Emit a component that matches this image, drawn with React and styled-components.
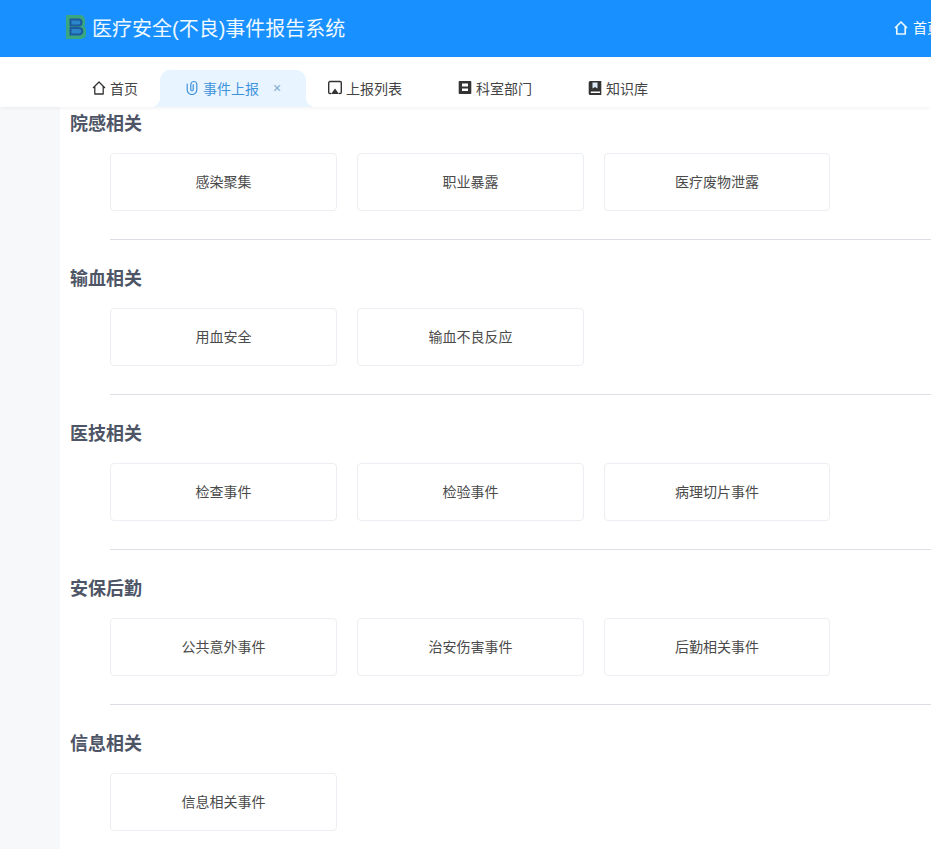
import React from "react";
import styled, { createGlobalStyle } from "styled-components";

const GlobalStyle = createGlobalStyle`
  html, body {
    margin: 0;
    padding: 0;
    height: 100%;
    overflow: hidden;
    background: #fff;
    font-family: "Liberation Sans", "Noto Sans CJK SC", sans-serif;
  }
`;

const Page = styled.div`
  width: 931px;
  height: 849px;
  display: flex;
  flex-direction: column;
  overflow: hidden;
`;

const Header = styled.header`
  height: 57px;
  flex: none;
  box-sizing: border-box;
  background: #1890ff;
  display: flex;
  align-items: center;
  justify-content: space-between;
  padding: 0 0 3px 66px;
  color: #fff;
  white-space: nowrap;
`;

const Brand = styled.div`
  display: flex;
  align-items: center;
  gap: 6px;
  font-size: 20px;
  color: #eef8ff;
`;

const HeaderLink = styled.div`
  display: flex;
  align-items: center;
  gap: 5px;
  font-size: 14px;
  width: 37px;
  overflow: hidden;
  flex: none;
`;

const TabBar = styled.nav`
  height: 50px;
  flex: none;
  box-sizing: border-box;
  padding: 13px 0 0 67px;
  display: flex;
  position: relative;
  background: #fff;
  box-shadow: 0 1px 4px rgba(0, 21, 41, 0.06);
`;

const Tab = styled.div`
  position: relative;
  box-sizing: border-box;
  width: ${(p) => p.$width}px;
  flex: none;
  display: flex;
  align-items: center;
  padding: 0 0 2px 25px;
  gap: 4px;
  font-size: 14px;
  color: ${(p) => (p.$active ? "#3f93dc" : "#444")};
  background: ${(p) => (p.$active ? "#e8f4ff" : "transparent")};
  border-radius: 10px 10px 0 0;
  margin-right: ${(p) => (p.$active ? "-3px" : "0")};
  z-index: ${(p) => (p.$active ? 1 : 0)};

  ${(p) =>
    p.$active &&
    `
    &::before, &::after {
      content: "";
      position: absolute;
      bottom: 0;
      width: 10px;
      height: 10px;
    }
    &::before {
      left: -10px;
      background: radial-gradient(circle at 0 0, transparent 10px, #e8f4ff 10.5px);
    }
    &::after {
      right: -10px;
      background: radial-gradient(circle at 100% 0, transparent 10px, #e8f4ff 10.5px);
    }
  `}
`;

const TabIcon = styled.svg`
  width: 14px;
  height: 15px;
  flex: none;
  color: ${(p) => (p.$active ? "#3f93dc" : "#333")};
`;

const HeaderIcon = styled(TabIcon)`
  color: #e8f7ff;
`;

const Close = styled.span`
  margin-left: 10px;
  font-size: 14px;
  color: #7fa9cf;
`;

const Body = styled.div`
  flex: 1;
  display: flex;
  min-height: 0;
`;

const Gutter = styled.aside`
  width: 60px;
  flex: none;
  background: #f6f8fa;
`;

const Content = styled.main`
  flex: 1;
  min-width: 0;
  padding: 4px 0 0 10px;
  overflow: hidden;
`;

const Section = styled.section`
  padding-bottom: 26px;
`;

const Title = styled.h3`
  margin: 0;
  padding-top: 1px;
  font-size: 18px;
  line-height: 24px;
  font-weight: 700;
  color: #4e5566;
`;

const CardRow = styled.div`
  margin: 17px 0 28px 40px;
  display: flex;
  gap: 20px;
`;

const Card = styled.div`
  box-sizing: border-box;
  width: 227px;
  height: 58px;
  flex: none;
  display: flex;
  align-items: center;
  justify-content: center;
  padding-bottom: 2px;
  background: #fff;
  border: 1px solid #ebeef2;
  border-radius: 4px;
  font-size: 14px;
  color: #4a4a4a;

  &:nth-child(3) {
    width: 226px;
  }
`;

const Divider = styled.hr`
  margin: 0 0 0 40px;
  border: 0;
  border-top: 1px solid #dcdfe6;
`;

const homePath = "M1 8 7 2l6 6M2.800 6.600V14h8.400V6.600";

const HomeIcon = () => (
  <TabIcon viewBox="0 0 14 15" fill="none" stroke="currentColor" strokeWidth="1.3">
    <path d={homePath} strokeLinejoin="round" />
  </TabIcon>
);

const ClipIcon = () => (
  <TabIcon $active viewBox="0 0 14 15" fill="none" stroke="currentColor" strokeWidth="1.2" strokeLinecap="round">
    <path d="M2.200 4v5.800a4.800 4.800 0 0 0 9.600 0V4.500a3 3 0 0 0-6 0v5.300a1.200 1.200 0 0 0 2.400 0V4.500" />
  </TabIcon>
);

const ScreenIcon = () => (
  <TabIcon viewBox="0 0 14 15">
    <path d="M3 13.500H2A1.300 1.300 0 0 1 .700 12.200V2.800A1.300 1.300 0 0 1 2 1.500h10a1.300 1.300 0 0 1 1.300 1.300v9.400a1.300 1.300 0 0 1-1.300 1.300h-1" fill="none" stroke="currentColor" strokeWidth="1.4" />
    <path d="M7 8.500 11 14H3z" fill="currentColor" />
  </TabIcon>
);

const NotebookIcon = () => (
  <TabIcon viewBox="0 0 14 15">
    <path fillRule="evenodd" fill="currentColor" d="M1.500 1h11a.8.8 0 0 1 .8.8v11.400a.8.8 0 0 1-.8.8h-11a.8.800 0 0 1-.8-.8V1.800a.8.800 0 0 1 .8-.8ZM4 3.500v3h6v-3Zm0 5v2.500h6V8.500Z" />
  </TabIcon>
);

const BookIcon = () => (
  <TabIcon viewBox="0 0 14 15">
    <path fill="currentColor" d="M2.200 1H13.300v14H2.200A1.500 1.500 0 0 1 .7 13.500V2.500A1.500 1.500 0 0 1 2.200 1Z" />
    <path fill="#fff" d="M2.800 11.500h9.200v1.500H2.800z" />
    <path fill="#dbe9f7" d="M4.500 2.500h5v6L7 7 4.500 8.500Z" />
  </TabIcon>
);

const HeaderHomeIcon = () => (
  <HeaderIcon viewBox="0 0 14 15" fill="none" stroke="currentColor" strokeWidth="1.7">
    <path d={homePath} strokeLinejoin="round" />
  </HeaderIcon>
);

const Logo = () => (
  <svg width="20" height="24" viewBox="0 0 20 24">
    <path d="M0 0h14a5 5 0 0 1 5 5v3.500a4 4 0 0 1-1 2.700 4.500 4.500 0 0 1 2 3.800V19a5 5 0 0 1-5 5H0z" fill="#3aa680" />
    <path fill="#2b86c9" stroke="#1c5a9e" strokeWidth="2" d="M4.500 4.500h8a3 3 0 0 1 0 6h-8z" />
    <path fill="#2b86c9" stroke="#1c5a9e" strokeWidth="2" d="M4.500 13h9a3.300 3.300 0 0 1 0 6.500h-9z" />
  </svg>
);

const groups = [
  { title: "院感相关", items: ["感染聚集", "职业暴露", "医疗废物泄露"] },
  { title: "输血相关", items: ["用血安全", "输血不良反应"] },
  { title: "医技相关", items: ["检查事件", "检验事件", "病理切片事件"] },
  { title: "安保后勤", items: ["公共意外事件", "治安伤害事件", "后勤相关事件"] },
  { title: "信息相关", items: ["信息相关事件"] },
];

export default function App() {
  return (
    <Page>
      <GlobalStyle />
      <Header>
        <Brand>
          <Logo />
          医疗安全(不良)事件报告系统
        </Brand>
        <HeaderLink>
          <HeaderHomeIcon />
          <span>首页</span>
        </HeaderLink>
      </Header>
      <TabBar>
        <Tab $width={93}>
          <HomeIcon />
          首页
        </Tab>
        <Tab $width={146} $active>
          <ClipIcon />
          事件上报
          <Close>×</Close>
        </Tab>
        <Tab $width={130}>
          <ScreenIcon />
          上报列表
        </Tab>
        <Tab $width={130}>
          <NotebookIcon />
          科室部门
        </Tab>
        <Tab $width={130}>
          <BookIcon />
          知识库
        </Tab>
      </TabBar>
      <Body>
        <Gutter />
        <Content>
          {groups.map((g, i) => (
            <Section key={g.title}>
              <Title>{g.title}</Title>
              <CardRow>
                {g.items.map((item) => (
                  <Card key={item}>{item}</Card>
                ))}
              </CardRow>
              {i < groups.length - 1 && <Divider />}
            </Section>
          ))}
        </Content>
      </Body>
    </Page>
  );
}
